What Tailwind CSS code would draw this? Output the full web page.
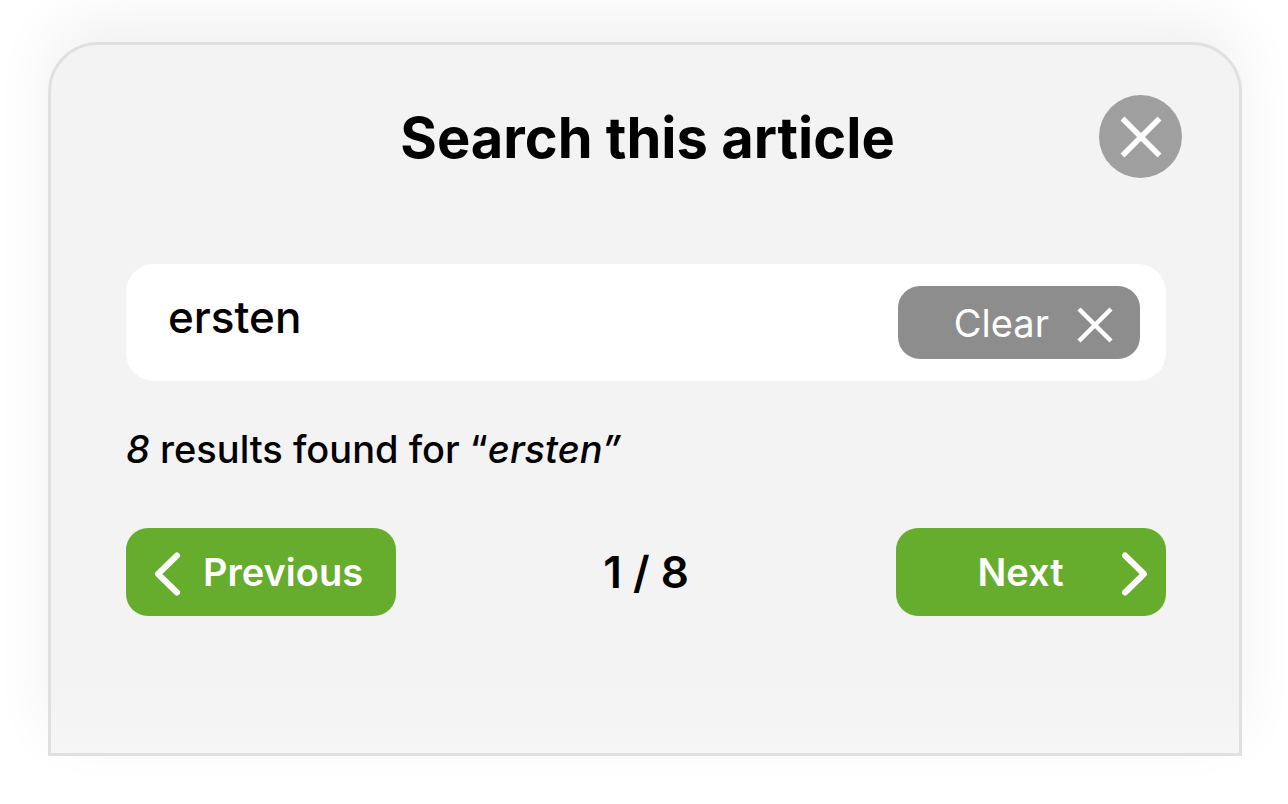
<!DOCTYPE html>
<html lang="en">
  <head>
    <meta charset="UTF-8" />
    <meta name="viewport" content="width=device-width, initial-scale=1.0" />
    <title>Search this article</title>
    <script src="https://cdn.jsdelivr.net/npm/@tailwindcss/browser@4"></script>
  </head>
  <body class="bg-white pt-[42px] pr-[46px] pb-12 pl-12 font-['Inter',sans-serif] text-black">
    <section
      class="rounded-t-[50px] border-3 border-[#e0e0e0] bg-[#f3f3f3] bg-linear-to-t from-[#f6f6f6] to-[#f3f3f3] to-[64px] pt-[50px] pb-[137px] shadow-[0_-24px_60px_rgba(0,0,0,0.06)]"
    >
      <header class="grid grid-cols-[83px_1fr_83px] items-center pr-[57px] pl-[62px]">
        <h1 class="col-start-2 pt-1 text-center text-[56px] leading-[79px] font-bold">Search this article</h1>
        <button type="button" aria-label="Close" class="size-[83px] rounded-full bg-[#9f9f9f] text-white">
          <svg class="size-full" viewBox="0 0 83 83" fill="none" stroke="currentColor" stroke-width="5.5">
            <path d="M23.5 23.5 60.5 60.5M60.5 23.5 23.5 60.5" />
          </svg>
        </button>
      </header>

      <form id="searchForm" class="mt-[86px] mr-[73px] ml-[75px]">
        <div class="flex h-[117px] items-center rounded-[28px] bg-white pr-[26px] pl-[42px]">
          <input
            type="text"
            id="query"
            name="query"
            aria-label="Search term"
            value="ersten"
            class="min-w-0 flex-1 pb-3 text-[44px] leading-[56px] font-medium focus:outline-none"
          />
          <button
            type="reset"
            class="flex h-[73px] w-[242px] items-center justify-end gap-7 rounded-[22px] bg-[#8d8d8d] pr-[27px] text-[38px] leading-[48px] text-white"
          >
            Clear
            <svg class="mt-1 size-9" viewBox="0 0 36 36" fill="none" stroke="currentColor" stroke-width="4.5">
              <path d="M2 2 34 34M34 2 2 34" />
            </svg>
          </button>
        </div>

        <p class="mt-[44px] text-[38px] leading-[48px] font-medium">
          <em>8</em> results found for “<em>ersten”</em>
        </p>

        <div class="mt-[55px] grid grid-cols-[270px_1fr_270px] items-center">
          <button
            type="button"
            class="flex h-[88px] items-center gap-[22px] rounded-[22px] bg-[#66ac2d] pl-7 text-[38px] leading-[48px] font-semibold text-white"
          >
            <svg class="mt-1 h-[44px] w-[27px]" viewBox="0 0 27 44" fill="none" stroke="currentColor" stroke-width="6" stroke-linecap="round" stroke-linejoin="round">
              <path d="M23 3.500 4 22 23 40.500" />
            </svg>
            Previous
          </button>
          <p class="text-center text-[44px] leading-[48px] font-semibold">1 / 8</p>
          <button
            type="button"
            class="flex h-[88px] items-center rounded-[22px] bg-[#66ac2d] pr-[18px] text-[38px] leading-[48px] font-semibold text-white"
          >
            <span class="flex-1 pl-[24px] text-center">Next</span>
            <svg class="mt-1 h-[44px] w-[27px]" viewBox="0 0 27 44" fill="none" stroke="currentColor" stroke-width="6" stroke-linecap="round" stroke-linejoin="round">
              <path d="M4 3.500 23 22 4 40.500" />
            </svg>
          </button>
        </div>
      </form>
    </section>
  </body>
</html>
